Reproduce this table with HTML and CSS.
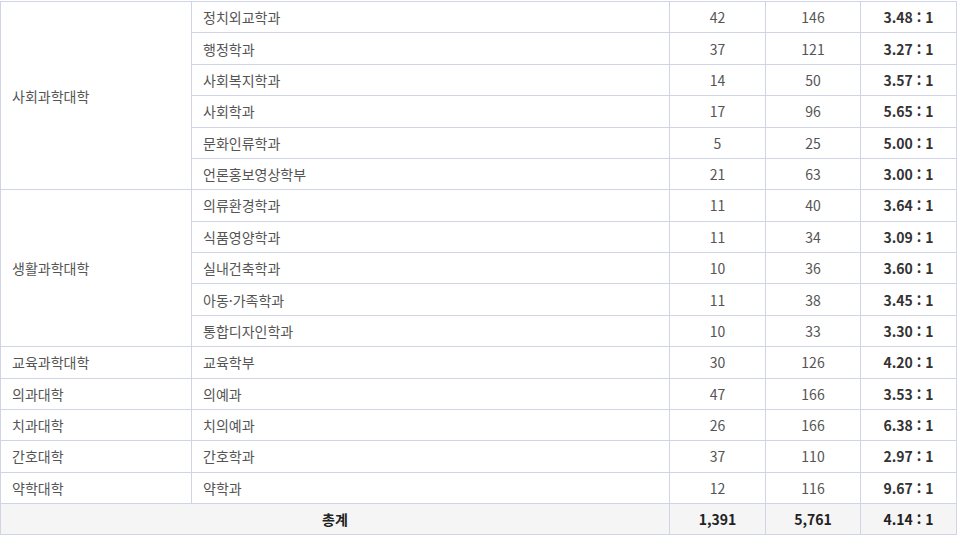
FILE: index.html
```html
<!DOCTYPE html>
<html lang="ko">

<head>
    <meta charset="UTF-8">
    <meta name="viewport" content="width=device-width, initial-scale=1.0">
    <title>모집단위별 경쟁률</title>
    <link rel="stylesheet" href="styles.css">
</head>

<body>
    <table class="rate-table">
        <colgroup>
            <col class="col-college">
            <col class="col-dept">
            <col class="col-num">
            <col class="col-num2">
            <col class="col-num">
        </colgroup>
        <tbody>
            <tr>
                <td class="college" rowspan="6">사회과학대학</td>
                <td>정치외교학과</td>
                <td class="num">42</td>
                <td class="num">146</td>
                <td class="rate">3.48 : 1</td>
            </tr>
            <tr>
                <td>행정학과</td>
                <td class="num">37</td>
                <td class="num">121</td>
                <td class="rate">3.27 : 1</td>
            </tr>
            <tr>
                <td>사회복지학과</td>
                <td class="num">14</td>
                <td class="num">50</td>
                <td class="rate">3.57 : 1</td>
            </tr>
            <tr>
                <td>사회학과</td>
                <td class="num">17</td>
                <td class="num">96</td>
                <td class="rate">5.65 : 1</td>
            </tr>
            <tr>
                <td>문화인류학과</td>
                <td class="num">5</td>
                <td class="num">25</td>
                <td class="rate">5.00 : 1</td>
            </tr>
            <tr>
                <td>언론홍보영상학부</td>
                <td class="num">21</td>
                <td class="num">63</td>
                <td class="rate">3.00 : 1</td>
            </tr>
            <tr>
                <td class="college" rowspan="5">생활과학대학</td>
                <td>의류환경학과</td>
                <td class="num">11</td>
                <td class="num">40</td>
                <td class="rate">3.64 : 1</td>
            </tr>
            <tr>
                <td>식품영양학과</td>
                <td class="num">11</td>
                <td class="num">34</td>
                <td class="rate">3.09 : 1</td>
            </tr>
            <tr>
                <td>실내건축학과</td>
                <td class="num">10</td>
                <td class="num">36</td>
                <td class="rate">3.60 : 1</td>
            </tr>
            <tr>
                <td>아동·가족학과</td>
                <td class="num">11</td>
                <td class="num">38</td>
                <td class="rate">3.45 : 1</td>
            </tr>
            <tr>
                <td>통합디자인학과</td>
                <td class="num">10</td>
                <td class="num">33</td>
                <td class="rate">3.30 : 1</td>
            </tr>
            <tr>
                <td class="college">교육과학대학</td>
                <td>교육학부</td>
                <td class="num">30</td>
                <td class="num">126</td>
                <td class="rate">4.20 : 1</td>
            </tr>
            <tr>
                <td class="college">의과대학</td>
                <td>의예과</td>
                <td class="num">47</td>
                <td class="num">166</td>
                <td class="rate">3.53 : 1</td>
            </tr>
            <tr>
                <td class="college">치과대학</td>
                <td>치의예과</td>
                <td class="num">26</td>
                <td class="num">166</td>
                <td class="rate">6.38 : 1</td>
            </tr>
            <tr>
                <td class="college">간호대학</td>
                <td>간호학과</td>
                <td class="num">37</td>
                <td class="num">110</td>
                <td class="rate">2.97 : 1</td>
            </tr>
            <tr>
                <td class="college">약학대학</td>
                <td>약학과</td>
                <td class="num">12</td>
                <td class="num">116</td>
                <td class="rate">9.67 : 1</td>
            </tr>
            <tr class="total">
                <td colspan="2">총계</td>
                <td>1,391</td>
                <td>5,761</td>
                <td>4.14 : 1</td>
            </tr>
        </tbody>
    </table>
</body>

</html>
```

FILE: styles.css
```css
body {
    margin: 0;
    padding-top: 1px;
    background: #fff;
    font-family: 'Noto Sans CJK KR', sans-serif;
    font-size: 14px;
    color: #555;
}

.rate-table {
    width: 957px;
    border-collapse: collapse;
    table-layout: fixed;
}

.col-college {
    width: 191px;
}

.col-dept {
    width: 478px;
}

.col-num {
    width: 96px;
}

.col-num2 {
    width: 95px;
}

.rate-table td {
    height: 30.375px;
    padding: 0 11px;
    border: 1px solid #cfd5e6;
    line-height: 20px;
    vertical-align: middle;
}

.rate-table .num {
    text-align: center;
}

.rate-table .rate {
    text-align: center;
    font-weight: bold;
    color: #333;
}

.total td {
    background: #f5f5f5;
    text-align: center;
    font-weight: bold;
    color: #222;
}
```
